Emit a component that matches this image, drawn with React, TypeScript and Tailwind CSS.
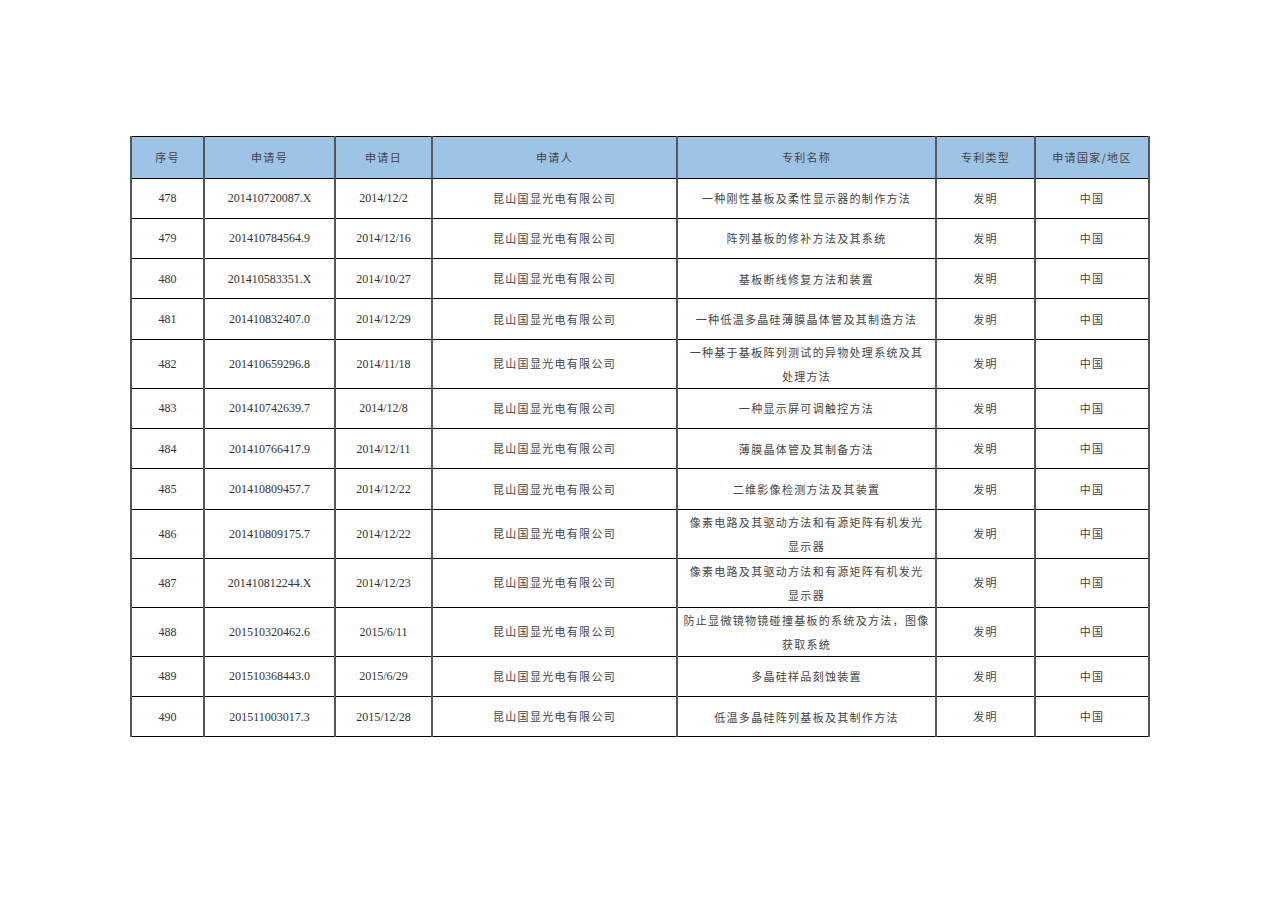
const rows: [string, string, string, string[]][] = [
  ["478", "201410720087.X", "2014/12/2", ["一种刚性基板及柔性显示器的制作方法"]],
  ["479", "201410784564.9", "2014/12/16", ["阵列基板的修补方法及其系统"]],
  ["480", "201410583351.X", "2014/10/27", ["基板断线修复方法和装置"]],
  ["481", "201410832407.0", "2014/12/29", ["一种低温多晶硅薄膜晶体管及其制造方法"]],
  ["482", "201410659296.8", "2014/11/18", ["一种基于基板阵列测试的异物处理系统及其", "处理方法"]],
  ["483", "201410742639.7", "2014/12/8", ["一种显示屏可调触控方法"]],
  ["484", "201410766417.9", "2014/12/11", ["薄膜晶体管及其制备方法"]],
  ["485", "201410809457.7", "2014/12/22", ["二维影像检测方法及其装置"]],
  ["486", "201410809175.7", "2014/12/22", ["像素电路及其驱动方法和有源矩阵有机发光", "显示器"]],
  ["487", "201410812244.X", "2014/12/23", ["像素电路及其驱动方法和有源矩阵有机发光", "显示器"]],
  ["488", "201510320462.6", "2015/6/11", ["防止显微镜物镜碰撞基板的系统及方法，图像", "获取系统"]],
  ["489", "201510368443.0", "2015/6/29", ["多晶硅样品刻蚀装置"]],
  ["490", "201511003017.3", "2015/12/28", ["低温多晶硅阵列基板及其制作方法"]],
];

const headers = ["序号", "申请号", "申请日", "申请人", "专利名称", "专利类型", "申请国家/地区"];
const widths = ["w-[73px]", "w-[131px]", "w-[97px]", "w-[245px]", "w-[259px]", "w-[99px]", "w-[114px]"];

const serif = "font-['Liberation_Serif','Times_New_Roman',serif] text-[12px] text-[#333]";
const cjk = "font-['Noto_Sans_CJK_SC','Noto_Sans',sans-serif] text-[11px] tracking-[1.3px] text-[#444]";
const cell = "border-y border-black border-x-2 border-x-[#555] text-center align-middle p-0";

export default function App() {
  return (
    <div className="w-[1280px] h-[904px] bg-white pt-[136px] pl-[130px]">
      <table className="border-collapse table-fixed w-[1018px] border border-black">
        <colgroup>
          {widths.map((w, i) => (
            <col key={i} className={w} />
          ))}
        </colgroup>
        <thead>
          <tr className="h-[41.5px] bg-[#9dc3e6]">
            {headers.map((h) => (
              <th key={h} className={`${cell} ${cjk} font-normal`}>
                {h}
              </th>
            ))}
          </tr>
        </thead>
        <tbody>
          {rows.map(([no, app, date, title]) => (
            <tr key={no} className={title.length > 1 ? "h-[48px]" : "h-[40.3px]"}>
              <td className={`${cell} ${serif}`}>{no}</td>
              <td className={`${cell} ${serif}`}>{app}</td>
              <td className={`${cell} ${serif}`}>{date}</td>
              <td className={`${cell} ${cjk}`}>昆山国显光电有限公司</td>
              <td className={`${cell} ${cjk}`}>
                {title.map((t) => (
                  <div key={t} className="whitespace-nowrap leading-[24px]">
                    {t}
                  </div>
                ))}
              </td>
              <td className={`${cell} ${cjk}`}>发明</td>
              <td className={`${cell} ${cjk}`}>中国</td>
            </tr>
          ))}
        </tbody>
      </table>
    </div>
  );
}
